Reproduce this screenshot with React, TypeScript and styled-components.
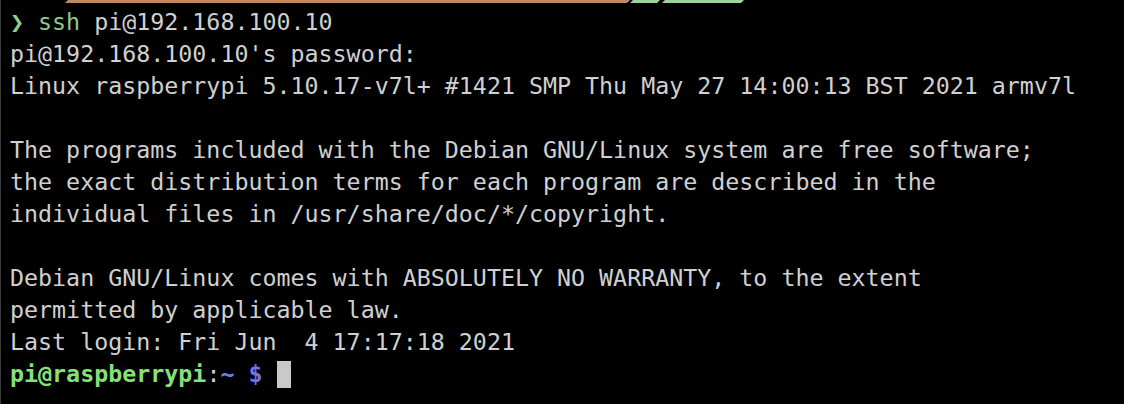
import React from 'react';
import styled, { createGlobalStyle } from 'styled-components';

const GlobalStyle = createGlobalStyle`
  html, body {
    margin: 0;
    padding: 0;
    background-color: #000;
  }
`;

const Window = styled.div`
  width: 1124px;
  height: 404px;
  box-sizing: border-box;
  background-color: #000;
  border-left: 1px solid #3a3a3a;
  overflow: hidden;
  display: flex;
  flex-direction: column;
`;

const PowerBar = styled.div`
  display: flex;
  height: 3px;
  flex-shrink: 0;
`;

const Segment = styled.div<{ left: number; width: number; color: string }>`
  margin-left: ${(props) => props.left}px;
  width: ${(props) => props.width}px;
  height: 3px;
  background-color: ${(props) => props.color};
  clip-path: polygon(3px 0, 100% 0, calc(100% - 3px) 100%, 0 100%);
`;

const Screen = styled.pre`
  margin: 0;
  padding: 3px 0 0 9px;
  font-family: 'DejaVu Sans Mono', 'Liberation Mono', monospace;
  font-size: 23.3px;
  line-height: 32px;
  color: #d0d0d0;
  white-space: pre;
`;

const Line = styled.div`
  height: 32px;
`;

const Chevron = styled.span`
  display: inline-block;
  width: 1ch;
  color: #8fd18a;
`;

const Cmd = styled.span`
  color: #8fc98a;
`;

const UserHost = styled.span`
  color: #86e07a;
  font-weight: bold;
`;

const Path = styled.span`
  color: #6b7fe0;
  font-weight: bold;
`;

const Dollar = styled.span`
  color: #7474ea;
  font-weight: bold;
`;

const Cursor = styled.span`
  display: inline-block;
  width: 14px;
  height: 27px;
  background-color: #c9c9c9;
  vertical-align: -6px;
`;

const lines = [
  "pi@192.168.100.10's password:",
  'Linux raspberrypi 5.10.17-v7l+ #1421 SMP Thu May 27 14:00:13 BST 2021 armv7l',
  '',
  'The programs included with the Debian GNU/Linux system are free software;',
  'the exact distribution terms for each program are described in the',
  'individual files in /usr/share/doc/*/copyright.',
  '',
  'Debian GNU/Linux comes with ABSOLUTELY NO WARRANTY, to the extent',
  'permitted by applicable law.',
  'Last login: Fri Jun  4 17:17:18 2021',
];

const App = () => {
  return (
    <Window>
      <GlobalStyle />
      <PowerBar>
        <Segment left={64} width={565} color="#bf8a62" />
        <Segment left={0} width={30} color="#9dd49a" />
        <Segment left={2} width={82} color="#9dd49a" />
      </PowerBar>
      <Screen>
        <Line>
          <Chevron>❯</Chevron> <Cmd>ssh</Cmd> pi@192.168.100.10
        </Line>
        {lines.map((text, i) => (
          <Line key={i}>{text}</Line>
        ))}
        <Line>
          <UserHost>pi@raspberrypi</UserHost>:<Path>~</Path> <Dollar>$</Dollar> <Cursor />
        </Line>
      </Screen>
    </Window>
  );
};

export default App;
